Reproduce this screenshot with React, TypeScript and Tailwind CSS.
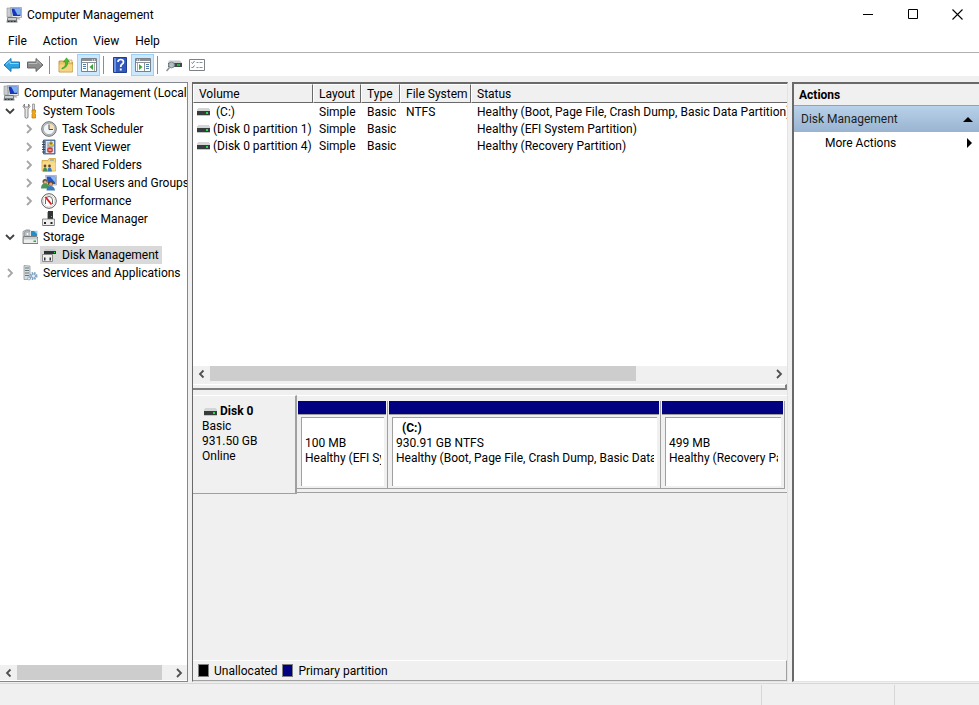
import type { ReactNode } from 'react'
import { clsx } from 'clsx'

interface IconProps {
  className?: string
}

interface TreeItem {
  label: string
  icon: (props: IconProps) => ReactNode
  level: number
  state?: 'open' | 'closed'
  selected?: boolean
}

function ComputerIcon({ className = 'size-4' }: IconProps) {
  return (
    <svg viewBox="0 0 16 16" className={className}>
      <path d="M1 1h4v9H1z" fill="#c9cdcd" stroke="#8b9293" strokeWidth=".6" />
      <path d="M4.500.500h11v10H6z" fill="#e6e8ea" stroke="#8d9297" strokeWidth=".7" />
      <path d="M5.500 1.500h9v7.500H7z" fill="#1438b8" />
      <path d="M8 1.500h6.500v6L11.500 8z" fill="#7fb0f0" />
      <path d="M9 10.500h4l1.500 2H9z" fill="#b0b5b8" />
      <path d="M1.500 10h9l1 5.500H.5z" fill="#747a7d" />
      <path d="M2 11h8v2H2z" fill="#c9cdcf" />
      <path d="M2 14h1.500v1H2zM5 14h1.500v1H5zM8 14h1.500v1H8z" fill="#303436" />
    </svg>
  )
}

function ToolsIcon({ className = 'size-4' }: IconProps) {
  return (
    <svg viewBox="0 0 16 16" className={className}>
      <path
        d="M2.500 1L1 3.500 3 6v8.500q1.500 1.500 3 0V6l2-2.500L6.500 1v3h-4z"
        fill="#e8e8e8"
        stroke="#6d6d6d"
        strokeWidth=".8"
      />
      <path d="M10.500 1h2v6h-2z" fill="#d8d8d8" stroke="#777" strokeWidth=".6" />
      <path d="M10 7h3.500v2.500l-.7.700.7 1V15H10v-3.800l.7-1-.7-.7z" fill="#f2a81d" stroke="#b97808" strokeWidth=".7" />
    </svg>
  )
}

function ClockIcon({ className = 'size-4' }: IconProps) {
  return (
    <svg viewBox="0 0 16 16" className={className}>
      <circle cx="8" cy="8" r="7.300" fill="#c3c6c9" stroke="#6e7073" strokeWidth="1" />
      <circle cx="8" cy="8" r="5.600" fill="#f1f6fa" stroke="#8f9294" strokeWidth=".6" />
      <path d="M8 8V2.500A5.500 5.500 0 0 1 13.500 8z" fill="#f8dfb0" />
      <path d="M8 3.500V8.500h4" fill="none" stroke="#4c5155" />
    </svg>
  )
}

function EventIcon({ className = 'size-4' }: IconProps) {
  return (
    <svg viewBox="0 0 16 16" className={className}>
      <path d="M2.500 1h11.500v14H2.500z" fill="#7594b8" stroke="#345482" strokeWidth=".8" />
      <path d="M5 2h8v12H5z" fill="#dfe8f3" />
      <path d="M6 4h6M6 6h6M6 8h6M6 10h6M6 12h6" stroke="#7899bf" />
      <path d="M1 3h3M1 5.500h3M1 8h3M1 10.500h3M1 13h3" stroke="#36445b" />
      <path d="M10 2l3 5H7z" fill="#ffd234" stroke="#ad8517" strokeWidth=".5" />
      <path d="M10 3.500v2" stroke="#222" />
      <circle cx="9" cy="11" r="2.800" fill="#d43629" />
      <path d="M7.500 11h3" stroke="#fff" />
    </svg>
  )
}

function SharedIcon({ className = 'size-4' }: IconProps) {
  return (
    <svg viewBox="0 0 16 16" className={className}>
      <path d="M1 3.500h6l1-2h6.500V14H1z" fill="#f5d578" stroke="#c9982f" strokeWidth=".7" />
      <path d="M9 2.500h4v1H9z" fill="#4f9ed4" />
      <path d="M1.500 5.500h13v8h-13z" fill="#f9dc8e" />
      <circle cx="4" cy="9" r="1.400" fill="#684b29" />
      <path d="M2 14.500q0-4 2-4t2.500 4z" fill="#458f53" />
      <circle cx="8.500" cy="9" r="1.400" fill="#684b29" />
      <path d="M6.500 14.500q0-4 2-4t2.500 4z" fill="#397abd" />
    </svg>
  )
}

function UsersIcon({ className = 'size-4' }: IconProps) {
  return (
    <svg viewBox="0 0 16 16" className={className}>
      <path d="M4.500.500h11v9.500H6z" fill="#dfe4e9" stroke="#8c9298" strokeWidth=".6" />
      <path d="M5.500 1.500h9v7.500H7z" fill="#2355c5" />
      <path d="M9 1.500h5.500v6.500z" fill="#8ab8f0" />
      <circle cx="4" cy="6.500" r="2.500" fill="#67563a" />
      <circle cx="4.300" cy="7.200" r="1.500" fill="#dcb183" />
      <path d="M0 13.500q0-5 4-5t4.500 5z" fill="#4b965b" />
      <circle cx="9.500" cy="8.500" r="2.500" fill="#68471f" />
      <circle cx="9.800" cy="9.200" r="1.600" fill="#e0a671" />
      <path d="M5.500 15.500q0-4.500 4-4.500t4.500 4.500z" fill="#397abc" />
    </svg>
  )
}

function PerformanceIcon({ className = 'size-4' }: IconProps) {
  return (
    <svg viewBox="0 0 16 16" className={className}>
      <circle cx="8" cy="8" r="7.300" fill="#fff" stroke="#5e5e5e" />
      <circle cx="8" cy="8" r="5.800" fill="none" stroke="#c4c4c4" strokeWidth=".6" />
      <path d="M4.500 11V7a3.500 3.500 0 0 1 7 0v4" fill="none" stroke="#696969" strokeWidth="1" />
      <path d="M4.500 4l6 7.500" stroke="#dc1c1c" strokeWidth="1.800" />
    </svg>
  )
}

function DeviceIcon({ className = 'size-4' }: IconProps) {
  return (
    <svg viewBox="0 0 16 16" className={className}>
      <path d="M7 0h5v8H7z" fill="#303434" />
      <path d="M6 1h1v7H6z" fill="#a8adad" />
      <path d="M10 5h1v1h-1z" fill="#35e052" />
      <path d="M1.500 8h12v6.500h-12z" fill="#edeeed" stroke="#777" strokeWidth=".8" />
      <path d="M3 11h2v2H3zM9.500 11h2v2h-2z" fill="#222" />
      <path d="M2 14h11v1H2z" fill="#777" />
    </svg>
  )
}

function StorageIcon({ className = 'size-4' }: IconProps) {
  return (
    <svg viewBox="0 0 16 16" className={className}>
      <path d="M1 2.500Q4 0 8 1l1 7H1z" fill="#d6d9da" stroke="#777" strokeWidth=".6" />
      <circle cx="5.500" cy="5" r="3.500" fill="#b5bdc0" stroke="#777" strokeWidth=".5" />
      <circle cx="5.500" cy="5" r="1" fill="#fff" />
      <path d="M8 1.500h8v6.500H8z" fill="#dce6ec" />
      <path d="M9 2h6v5H9z" fill="#258cc5" />
      <path d="M12 2h3v3z" fill="#8fd3ee" />
      <path d="M1 9q0-1.500 1.500-1.500h12L16 9v5.500H1z" fill="#c8cccd" stroke="#62686a" strokeWidth=".8" />
      <path d="M2 10.500h13V14H2z" fill="#eceeee" />
      <path d="M11.500 11.500h2.500v1.500h-2.500z" fill="#19b538" />
    </svg>
  )
}

function DiskManagementIcon({ className = 'size-4' }: IconProps) {
  return (
    <svg viewBox="0 0 16 16" className={className}>
      <path d="M4 2h10l1 2H3z" fill="#c7cccc" />
      <path d="M3 4h12v3H3z" fill="#303434" />
      <path d="M13 5h1v1h-1z" fill="#3be358" />
      <path d="M1.500 7.500h10v7h-10z" fill="#f0f0f0" stroke="#777" strokeWidth=".8" />
      <path d="M3 10.500h1.500v3H3zM8.500 10.500H10v3H8.500z" fill="#333" />
    </svg>
  )
}

function ServicesIcon({ className = 'size-4' }: IconProps) {
  return (
    <svg viewBox="0 0 16 16" className={className}>
      <path d="M2 .5l6 .5v13.500H2z" fill="#d9dddf" stroke="#858b8e" strokeWidth=".7" />
      <path d="M3 3h4M3 5.500h4M3 8h4M3 10.500h4" stroke="#5f777f" />
      <circle cx="11.500" cy="11" r="3" fill="#e3edf6" stroke="#7ea3c4" strokeWidth="2" strokeDasharray="1.400 1" />
      <circle cx="11.500" cy="11" r="2" fill="#e6eff7" stroke="#7197b8" strokeWidth=".8" />
      <circle cx="7" cy="13.500" r="1.500" fill="#d8e6f2" stroke="#7197b8" strokeDasharray="1 .5" />
    </svg>
  )
}

function DriveIcon() {
  return (
    <svg viewBox="0 0 13 8" className="h-2 w-[13px] shrink-0">
      <path d="M1 0h11v1h1v2H0V1h1z" fill="#d3d5d6" />
      <path d="M0 3h13v4H0z" fill="#363c3b" />
      <path d="M0 7h13v1H0z" fill="#c4c6c6" />
      <path d="M9 4h2v2H9z" fill="#2fd84c" />
    </svg>
  )
}

function ArrowIcon({ forward = false }: { forward?: boolean }) {
  return (
    <svg viewBox="0 0 18 16" className={clsx('h-4 w-[18px]', forward && '-scale-x-100')}>
      <path
        d="M1 8l7-6.500v3.500h8.500v6H8v3.500z"
        fill={forward ? '#8d8d8d' : '#2ea3e4'}
        stroke={forward ? '#666' : '#1476b6'}
        strokeLinejoin="round"
      />
      <path d="M3 7.500l4-3.700V6.500h8.500" fill="none" stroke={forward ? '#bbb' : '#8bd8fa'} />
    </svg>
  )
}

function FolderUpIcon() {
  return (
    <svg viewBox="0 0 16 16" className="size-4">
      <path d="M1 4h6l1 1.500h6.500V15H1z" fill="#ebc466" stroke="#b88a2e" strokeWidth=".8" />
      <path d="M9 3h5v3H9z" fill="#fff0c0" stroke="#b88a2e" strokeWidth=".6" />
      <path d="M1.500 7.500h13v7h-13z" fill="#f4d581" />
      <path d="M4 11q4-1 3.500-6H5.500L8.500.8l3 4.200h-2q1 5-5.500 7z" fill="#49bd2b" stroke="#328a1c" strokeWidth=".5" />
    </svg>
  )
}

function PaneIcon({ side }: { side: 'left' | 'right' }) {
  return (
    <svg viewBox="0 0 16 14" className={clsx('h-[14px] w-4', side === 'right' && '-scale-x-100')}>
      <path d="M.5.500h15v13H.5z" fill="#fff" stroke="#7b8186" />
      <path d="M1 1h14v2H1z" fill="#8a9095" />
      <path d="M11 2h1M13 2h1" stroke="#fff" />
      <path d="M1 4.500h14M6.500 5v8" stroke="#8a9095" />
      <path d="M2 6.500h3M2 8.500h3M2 10.500h3" stroke="#4b7caf" />
      <path d="M12 6v6L8.500 9z" fill="#39a935" />
      <path d="M13.500 5v8" stroke="#aaa" />
    </svg>
  )
}

function HelpIcon() {
  return (
    <svg viewBox="0 0 14 16" className="h-4 w-[14px]">
      <path d="M.5.500h13v15H.5z" fill="#3158bd" stroke="#203e91" />
      <path d="M1 1h2v14H1z" fill="#6e92e3" />
      <path d="M5 5q0-2.500 2.700-2.500T10.500 5q0 1.500-1.600 2.300Q7.700 8 7.700 10" fill="none" stroke="#fff" strokeWidth="1.700" />
      <path d="M6.800 11.500h1.900v2H6.800z" fill="#fff" />
    </svg>
  )
}

function DiskSearchIcon() {
  return (
    <svg viewBox="0 0 16 16" className="size-4">
      <path d="M3 3.500h11l2 2.500H2z" fill="#c7cacc" />
      <path d="M2 6h14v4H2z" fill="#414849" />
      <path d="M11 7h3v2h-3z" fill="#23b83b" />
      <circle cx="5.500" cy="8" r="2.900" fill="#aebfc7" stroke="#7f8d93" />
      <path d="M3.500 10.500L.5 14" stroke="#8c8c8c" strokeWidth="1.500" />
    </svg>
  )
}

function CheckListIcon() {
  return (
    <svg viewBox="0 0 16 12" className="h-3 w-4">
      <path d="M.5.500h15v11H.5z" fill="#fff" stroke="#7b8186" />
      <path d="M2.500 3.500l1 1 2-2.500M2.500 8l1 1 2-2.500" fill="none" stroke="#3b83cc" />
      <path d="M7.500 3.500h2M10.500 3.500h3M7.500 8.500h2M10.500 8.500h3" stroke="#8a9095" />
    </svg>
  )
}

function Chevron({ direction, className }: { direction: 'left' | 'right' | 'down'; className?: string }) {
  const paths = {
    left: 'M6.500 1.500L3 5l3.500 3.500',
    right: 'M3 1l4 4-4 4',
    down: 'M1 3l4 4 4-4',
  }
  return (
    <svg viewBox="0 0 10 10" className={clsx('size-[10px]', className)}>
      <path d={paths[direction]} fill="none" stroke="currentColor" strokeWidth="1.800" />
    </svg>
  )
}

const TREE: TreeItem[] = [
  { label: 'Computer Management (Local)', icon: ComputerIcon, level: 0 },
  { label: 'System Tools', icon: ToolsIcon, level: 1, state: 'open' },
  { label: 'Task Scheduler', icon: ClockIcon, level: 2, state: 'closed' },
  { label: 'Event Viewer', icon: EventIcon, level: 2, state: 'closed' },
  { label: 'Shared Folders', icon: SharedIcon, level: 2, state: 'closed' },
  { label: 'Local Users and Groups', icon: UsersIcon, level: 2, state: 'closed' },
  { label: 'Performance', icon: PerformanceIcon, level: 2, state: 'closed' },
  { label: 'Device Manager', icon: DeviceIcon, level: 2 },
  { label: 'Storage', icon: StorageIcon, level: 1, state: 'open' },
  { label: 'Disk Management', icon: DiskManagementIcon, level: 2, selected: true },
  { label: 'Services and Applications', icon: ServicesIcon, level: 1, state: 'closed' },
]

const VOLUMES = [
  { name: '(C:)', fs: 'NTFS', status: 'Healthy (Boot, Page File, Crash Dump, Basic Data Partition)' },
  { name: '(Disk 0 partition 1)', fs: '', status: 'Healthy (EFI System Partition)' },
  { name: '(Disk 0 partition 4)', fs: '', status: 'Healthy (Recovery Partition)' },
]

const PARTITIONS = [
  { name: '', size: '100 MB', status: 'Healthy (EFI System Partition)' },
  { name: '(C:)', size: '930.91 GB NTFS', status: 'Healthy (Boot, Page File, Crash Dump, Basic Data Partition)' },
  { name: '', size: '499 MB', status: 'Healthy (Recovery Partition)' },
]

function TreeRow({ item }: { item: TreeItem }) {
  const Icon = item.icon
  return (
    <li className={clsx('flex h-[18px] items-center', item.level === 0 && 'pl-[2px]', item.level === 1 && 'pl-[3px]', item.level === 2 && 'pl-[22px]')}>
      {item.level > 0 && (
        <span className="flex w-[18px] shrink-0 pl-[2px]">
          {item.state && (
            <button type="button" aria-label={`Toggle ${item.label}`} className={item.state === 'open' ? 'text-[#404040]' : 'text-[#a6a6a6]'}>
              <Chevron direction={item.state === 'open' ? 'down' : 'right'} />
            </button>
          )}
        </span>
      )}
      <button type="button" className={clsx('flex h-[18px] items-center gap-[5px] pr-[3px] pl-px whitespace-nowrap', item.selected && 'bg-[#d9d9d9]')}>
        <Icon className="size-4 shrink-0" />
        {item.label}
      </button>
    </li>
  )
}

function ScrollBar({ label, thumbClass }: { label: string; thumbClass: string }) {
  return (
    <div className="flex h-[15px] shrink-0 bg-[#f0f0f0] text-[#505050]">
      <button type="button" aria-label={`${label} left`} className="flex w-[17px] items-center justify-center">
        <Chevron direction="left" />
      </button>
      <div className="flex-1">
        <div className={clsx('h-full bg-[#cdcdcd]', thumbClass)} />
      </div>
      <button type="button" aria-label={`${label} right`} className="flex w-[17px] items-center justify-center">
        <Chevron direction="right" />
      </button>
    </div>
  )
}

function ToolButton({ label, active, children }: { label: string; active?: boolean; children: ReactNode }) {
  return (
    <button
      type="button"
      aria-label={label}
      className={clsx('flex h-[22px] w-[23px] items-center justify-center border', active ? 'border-[#99d1ff] bg-[#cce8ff]' : 'border-transparent')}
    >
      {children}
    </button>
  )
}

function Divider() {
  return <span className="mr-1 ml-[3px] h-[18px] w-px bg-[#8d8d8d]" />
}

function TitleBar() {
  return (
    <header className="flex h-[29px] shrink-0 items-center bg-white pl-[6px]">
      <ComputerIcon />
      <h1 className="flex-1 pl-[5px]">Computer Management</h1>
      <button type="button" aria-label="Minimize" className="flex h-full w-[45px] items-center justify-center">
        <svg viewBox="0 0 11 11" className="size-[11px]"><path d="M0 5.500h10" stroke="#000" /></svg>
      </button>
      <button type="button" aria-label="Maximize" className="flex h-full w-[45px] items-center justify-center">
        <svg viewBox="0 0 11 11" className="size-[11px]"><path d="M.5.500h9v9h-9z" fill="none" stroke="#000" /></svg>
      </button>
      <button type="button" aria-label="Close" className="flex h-full w-[43px] items-center justify-center">
        <svg viewBox="0 0 11 11" className="size-[11px]"><path d="M.5.500l10 10M10.500.500l-10 10" stroke="#000" strokeWidth="1.100" /></svg>
      </button>
    </header>
  )
}

function VolumeList() {
  return (
    <div className="flex-1 overflow-hidden bg-white">
      <table className="w-full table-fixed border-separate border-spacing-0 text-left whitespace-nowrap">
        <colgroup>
          <col className="w-[120px]" />
          <col className="w-12" />
          <col className="w-[39px]" />
          <col className="w-[71px]" />
          <col />
        </colgroup>
        <thead>
          <tr className="h-[19px] bg-[#f0f0f0]">
            {['Volume', 'Layout', 'Type', 'File System', 'Status'].map((title) => (
              <th
                key={title}
                className="border-t border-r border-b border-l border-t-white border-r-[#696969] border-b-[#696969] border-l-white p-0 pl-[5px] font-normal last:border-r-0"
              >
                {title}
              </th>
            ))}
          </tr>
        </thead>
        <tbody>
          {VOLUMES.map((volume) => (
            <tr key={volume.name} className="h-[17px]">
              <td className="p-0 pl-1">
                <span className="flex items-center gap-[3px]">
                  <DriveIcon />
                  <span className={clsx(volume.fs && 'pl-[3px]')}>{volume.name}</span>
                </span>
              </td>
              <td className="p-0 pl-[6px]">Simple</td>
              <td className="p-0 pl-[6px]">Basic</td>
              <td className="p-0 pl-[6px]">{volume.fs}</td>
              <td className="p-0 pl-[6px]">{volume.status}</td>
            </tr>
          ))}
        </tbody>
      </table>
    </div>
  )
}

function DiskRow() {
  return (
    <div className="mt-[5px] flex">
      <div className="h-[99px] w-[104px] shrink-0 border-t border-r-2 border-b border-t-white border-r-[#a0a0a0] border-b-[#a0a0a0] pt-2 pl-[9px] leading-[15px]">
        <div className="flex items-center gap-[3px] pl-[2px] font-bold">
          <DriveIcon />
          Disk 0
        </div>
        <p>Basic</p>
        <p>931.50 GB</p>
        <p>Online</p>
      </div>
      <div className="h-[98px] min-w-0 flex-1 border-t border-b border-t-white border-b-[#a0a0a0] pt-[5px] pr-[2px]">
        <div className="grid grid-cols-[91fr_273fr_124fr]">
          {PARTITIONS.map((part) => (
            <div key={part.size} className="min-w-0 border-r border-b border-[#a0a0a0]">
              <div className="mx-px h-[14px] border-b border-[#a0a0a0] bg-[#000080]" />
              <div className="mt-[2px] mr-[3px] mb-[2px] ml-1 h-[69px] border-t border-l border-[#a0a0a0] bg-white pt-[3px] pr-[3px] pl-[3px] leading-[15px] whitespace-nowrap">
                <p className="h-[15px] pl-[6px] font-bold">{part.name}</p>
                <p className="overflow-hidden">{part.size}</p>
                <p className="overflow-hidden">{part.status}</p>
              </div>
            </div>
          ))}
        </div>
      </div>
    </div>
  )
}

export default function App() {
  return (
    <div className="flex h-screen flex-col overflow-hidden bg-[#f0f0f0] font-[Roboto,'Noto_Sans',sans-serif] text-[12px] leading-4 text-black">
      <TitleBar />
      <nav className="flex h-6 shrink-0 items-center gap-4 border-b border-[#b0b0b0] bg-white pl-2">
        {['File', 'Action', 'View', 'Help'].map((item) => (
          <button key={item} type="button">{item}</button>
        ))}
      </nav>
      <div className="flex h-[23px] shrink-0 items-center bg-white">
        <ToolButton label="Back"><ArrowIcon /></ToolButton>
        <ToolButton label="Forward"><ArrowIcon forward /></ToolButton>
        <Divider />
        <ToolButton label="Up one level"><FolderUpIcon /></ToolButton>
        <ToolButton label="Show console tree" active><PaneIcon side="left" /></ToolButton>
        <Divider />
        <ToolButton label="Help"><HelpIcon /></ToolButton>
        <ToolButton label="Show action pane" active><PaneIcon side="right" /></ToolButton>
        <Divider />
        <ToolButton label="Rescan disks"><DiskSearchIcon /></ToolButton>
        <ToolButton label="Settings"><CheckListIcon /></ToolButton>
      </div>

      <div className="mt-[6px] flex min-h-0 flex-1 gap-1">
        <aside className="flex w-[188px] shrink-0 flex-col overflow-hidden border-t border-r border-b border-[#828790] bg-white">
          <ul className="flex-1 overflow-hidden pt-px">
            {TREE.map((item) => (
              <TreeRow key={item.label} item={item} />
            ))}
          </ul>
          <ScrollBar label="Scroll tree" thumbClass="w-[95%]" />
          <div className="h-px shrink-0 bg-white" />
        </aside>

        <main className="flex min-w-0 flex-1 flex-col border-t-2 border-r border-b border-l border-t-[#696969] border-r-[#e3e3e3] border-b-[#e3e3e3] border-l-[#696969]">
          <section className="flex h-[297px] shrink-0 flex-col">
            <VolumeList />
            <ScrollBar label="Scroll volumes" thumbClass="w-[76%]" />
          </section>
          <div className="mt-[3px] h-[6px] shrink-0 border-t border-r-2 border-b-2 border-t-white border-r-[#808080] border-b-[#808080]" />
          <section className="flex min-h-0 flex-1 flex-col">
            <DiskRow />
            <footer className="mt-auto flex h-[21px] shrink-0 items-center border-t border-r border-b border-t-white border-r-[#a0a0a0] border-b-[#a0a0a0] pl-[5px]">
              <span className="mr-[5px] h-[13px] w-[11px] border border-[#808080] bg-black" />
              Unallocated
              <span className="mr-[5px] ml-[5px] h-[13px] w-[11px] border border-[#808080] bg-[#000080]" />
              Primary partition
            </footer>
          </section>
        </main>

        <aside className="flex w-[187px] shrink-0 flex-col border-t-2 border-b border-l-2 border-t-[#696969] border-b-[#e3e3e3] border-l-[#696969] bg-white">
          <h2 className="h-[22px] border-b border-[#a0a0a0] bg-[#f0f0f0] pt-[3px] pl-[5px] font-bold">Actions</h2>
          <button type="button" className="flex h-[26px] items-center justify-between bg-linear-to-b from-[#b9d1ea] to-[#99b4d1] pr-[6px] pl-[7px] text-[#1e1e1e]">
            Disk Management
            <svg viewBox="0 0 10 5" className="h-[5px] w-[10px]"><path d="M5 0l5 5H0z" fill="#000" /></svg>
          </button>
          <button type="button" className="flex h-[22px] items-center justify-between pr-[7px] pl-[31px]">
            More Actions
            <svg viewBox="0 0 5 10" className="h-[10px] w-[5px]"><path d="M0 0l5 5-5 5z" fill="#000" /></svg>
          </button>
        </aside>
      </div>

      <footer className="mt-px flex h-[22px] shrink-0 justify-end border-t border-[#d7d7d7] pt-px">
        <span className="w-[133px] border-l border-[#d7d7d7]" />
        <span className="w-[85px] border-l border-[#d7d7d7]" />
      </footer>
    </div>
  )
}
